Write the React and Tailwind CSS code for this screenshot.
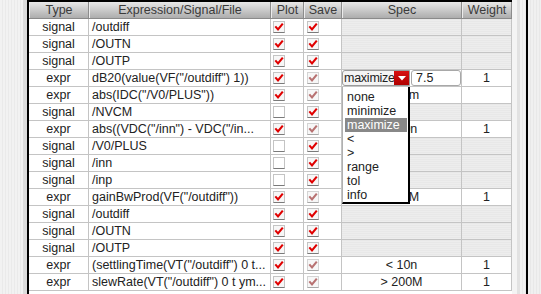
import React from 'react';

const rows = [
  { type: 'signal', expr: '/outdiff', plot: 'on', save: 'on' },
  { type: 'signal', expr: '/OUTN', plot: 'on', save: 'on' },
  { type: 'signal', expr: '/OUTP', plot: 'on', save: 'on' },
  { type: 'expr', expr: 'dB20(value(VF("/outdiff") 1))', plot: 'on', save: 'dim', editor: true, weight: '1' },
  { type: 'expr', expr: 'abs(IDC("/V0/PLUS"))', plot: 'on', save: 'dim', spec: '< 10m', weight: '' },
  { type: 'signal', expr: '/NVCM', plot: 'off', save: 'on' },
  { type: 'expr', expr: 'abs((VDC("/inn") - VDC("/in...', plot: 'on', save: 'dim', spec: '< 10n', weight: '1' },
  { type: 'signal', expr: '/V0/PLUS', plot: 'off', save: 'on' },
  { type: 'signal', expr: '/inn', plot: 'off', save: 'on' },
  { type: 'signal', expr: '/inp', plot: 'off', save: 'on' },
  { type: 'expr', expr: 'gainBwProd(VF("/outdiff"))', plot: 'on', save: 'dim', spec: '> 10M', weight: '1' },
  { type: 'signal', expr: '/outdiff', plot: 'on', save: 'on' },
  { type: 'signal', expr: '/OUTN', plot: 'on', save: 'on' },
  { type: 'signal', expr: '/OUTP', plot: 'on', save: 'on' },
  { type: 'expr', expr: '(settlingTime(VT("/outdiff") 0 t...', plot: 'on', save: 'dim', spec: '< 10n', weight: '1' },
  { type: 'expr', expr: 'slewRate(VT("/outdiff") 0 t ym...', plot: 'on', save: 'dim', spec: '> 200M', weight: '1' },
];

const options = ['none', 'minimize', 'maximize', '<', '>', 'range', 'tol', 'info'];

function Check({ state }) {
  const dim = state === 'dim';
  return (
    <svg width="12" height="12" viewBox="0 0 12 12" className="block">
      <rect x="0.5" y="0.5" width="11" height="11" fill={state === 'off' ? '#ffffff' : '#f7f7f7'} stroke={dim ? '#d4d4d4' : '#c4c4c4'} />
      <line x1="0.5" y1="11.5" x2="11.5" y2="11.5" stroke={dim ? '#a8a8a8' : '#7a7a7a'} />
      {state !== 'off' && (
        <path d="M2.3 5.4 L5 8.4 L9.8 2.6" fill="none" stroke={dim ? '#b87272' : '#e00000'} strokeWidth="2.1" strokeLinejoin="miter" />
      )}
    </svg>
  );
}

function HeaderCell({ w, children }) {
  return (
    <div className={`${w} shrink-0 h-full flex items-center justify-center border-r border-[#8c8c8c] border-l border-l-[#ececec] text-[#3a3a3a]`}>
      {children}
    </div>
  );
}

export default function App() {
  return (
    <div className="relative w-[541px] h-[294px] overflow-hidden flex bg-white font-['Liberation_Sans',Arial,sans-serif] text-[12.5px] leading-none text-[#222]">
      {/* left gutter */}
      <div className="w-[23px] shrink-0 bg-[repeating-linear-gradient(90deg,#f2f2f2_0px,#f2f2f2_2px,#eaeaea_2px,#eaeaea_3px)]" />
      <div className="w-[4px] shrink-0 bg-[#dcdcdc]" />

      <div className="flex-1 flex flex-col border-l-2 border-black">
        <div className="border-t-2 border-black flex">
          <div className="flex flex-col w-[483px] shrink-0">
            {/* header */}
            <div className="h-[17px] flex border-b border-[#8a8a8a] bg-gradient-to-b from-[#e8e8e8] to-[#adadad]">
              <HeaderCell w="w-[60px]">Type</HeaderCell>
              <HeaderCell w="w-[182px]">Expression/Signal/File</HeaderCell>
              <HeaderCell w="w-[33px]">Plot</HeaderCell>
              <HeaderCell w="w-[38px]">Save</HeaderCell>
              <HeaderCell w="w-[120px]">Spec</HeaderCell>
              <HeaderCell w="w-[50px]">Weight</HeaderCell>
            </div>

            {rows.map((r, i) => {
              const isExpr = r.type === 'expr';
              const grey = 'bg-[repeating-linear-gradient(0deg,#ededed_0px,#ededed_1px,#e8e8e8_1px,#e8e8e8_2px)]';
              return (
                <div key={i} className="h-[17px] flex border-b border-[#c4c4c4]">
                  <div className="w-[60px] shrink-0 border-r border-[#c4c4c4] flex items-center justify-center">{r.type}</div>
                  <div className="w-[182px] shrink-0 border-r border-[#c4c4c4] flex items-center pl-[3px] overflow-hidden whitespace-nowrap">{r.expr}</div>
                  <div className="w-[33px] shrink-0 border-r border-[#c4c4c4] flex items-center pl-[2px]">
                    <Check state={r.plot} />
                  </div>
                  <div className="w-[38px] shrink-0 border-r border-[#c4c4c4] flex items-center pl-[3px]">
                    <Check state={r.save} />
                  </div>
                  <div className={`w-[120px] shrink-0 border-r border-[#c4c4c4] flex items-center justify-center ${isExpr ? 'bg-white' : grey}`}>
                    {r.editor ? (
                      <div className="w-full h-full flex items-stretch">
                        <div className="w-[68px] shrink-0 flex border border-[#9a9a9a] rounded-l-[3px] bg-[#f4f4f4] overflow-hidden">
                          <div className="flex-1 flex items-center pl-[1px] overflow-hidden whitespace-nowrap tracking-[-0.25px]">maximize</div>
                          <div className="w-[15px] shrink-0 bg-gradient-to-b from-[#d81010] to-[#b00000] flex items-center justify-center">
                            <svg width="8" height="5" viewBox="0 0 8 5"><path d="M0 0 L8 0 L4 4.5 Z" fill="#fff" /></svg>
                          </div>
                        </div>
                        <div className="ml-[1px] w-[50px] shrink-0 border border-[#a8a8a8] rounded-[3px] bg-white flex items-center pl-[4px]">7.5</div>
                      </div>
                    ) : (
                      r.spec
                    )}
                  </div>
                  <div className={`w-[50px] shrink-0 border-r border-[#c4c4c4] flex items-center justify-center ${isExpr ? 'bg-white' : grey}`}>
                    {r.weight}
                  </div>
                </div>
              );
            })}
          </div>
          <div className="flex-1" />
        </div>
      </div>

      {/* right gutter */}
      <div className="w-[5px] shrink-0 bg-[#f4f4f4]" />
      <div className="w-[3px] shrink-0 bg-[#e2e2e2]" />
      <div className="w-[6px] shrink-0 bg-[repeating-linear-gradient(90deg,#f2f2f2_0px,#f2f2f2_2px,#eaeaea_2px,#eaeaea_3px)]" />
      <div className="w-[2px] shrink-0 bg-black" />
      <div className="w-[13px] shrink-0 bg-[repeating-linear-gradient(90deg,#f0f0f0_0px,#f0f0f0_2px,#e8e8e8_2px,#e8e8e8_3px)]" />

      {/* open spec dropdown */}
      <div className="absolute left-[342px] top-[87px] w-[68px] h-[117px] bg-white border-l border-l-[#b0b0b0] border-r-2 border-b-2 border-black pt-[3px] pl-[2px] pr-[1px]">
        {options.map((o) => (
          <div key={o} className={`h-[14px] flex items-center pl-[2px] ${o === 'maximize' ? 'bg-[#888888] text-white' : ''}`}>
            {o}
          </div>
        ))}
      </div>
    </div>
  );
}
